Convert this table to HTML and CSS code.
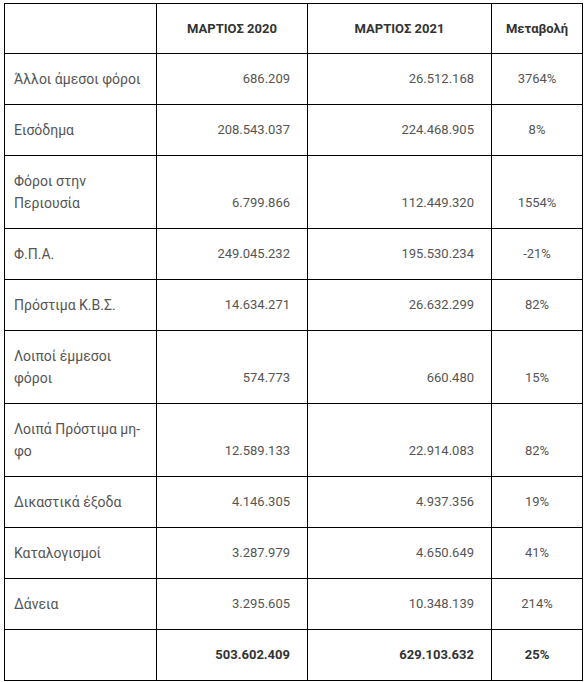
FILE: index.html
```html
<!DOCTYPE html>
<html lang="el">
<head>
<meta charset="utf-8">
<link rel="stylesheet" href="styles.css">
</head>
<body>
<div class="wrap">
<table class="tbl">
<colgroup>
<col class="c1"><col class="c2"><col class="c3"><col class="c4">
</colgroup>
<thead>
<tr><th></th><th>ΜΑΡΤΙΟΣ 2020</th><th>ΜΑΡΤΙΟΣ 2021</th><th>Μεταβολή</th></tr>
</thead>
<tbody>
<tr><td class="lbl">Άλλοι άμεσοι φόροι</td><td class="num">686.209</td><td class="num">26.512.168</td><td class="pct">3764%</td></tr>
<tr><td class="lbl">Εισόδημα</td><td class="num">208.543.037</td><td class="num">224.468.905</td><td class="pct">8%</td></tr>
<tr><td class="lbl">Φόροι στην Περιουσία</td><td class="num">6.799.866</td><td class="num">112.449.320</td><td class="pct">1554%</td></tr>
<tr><td class="lbl">Φ.Π.Α.</td><td class="num">249.045.232</td><td class="num">195.530.234</td><td class="pct">-21%</td></tr>
<tr><td class="lbl">Πρόστιμα Κ.Β.Σ.</td><td class="num">14.634.271</td><td class="num">26.632.299</td><td class="pct">82%</td></tr>
<tr><td class="lbl">Λοιποί έμμεσοι φόροι</td><td class="num">574.773</td><td class="num">660.480</td><td class="pct">15%</td></tr>
<tr><td class="lbl">Λοιπά Πρόστιμα μη-φο</td><td class="num">12.589.133</td><td class="num">22.914.083</td><td class="pct">82%</td></tr>
<tr><td class="lbl">Δικαστικά έξοδα</td><td class="num">4.146.305</td><td class="num">4.937.356</td><td class="pct">19%</td></tr>
<tr><td class="lbl">Καταλογισμοί</td><td class="num">3.287.979</td><td class="num">4.650.649</td><td class="pct">41%</td></tr>
<tr><td class="lbl">Δάνεια</td><td class="num">3.295.605</td><td class="num">10.348.139</td><td class="pct">214%</td></tr>
<tr class="total"><td class="lbl"></td><td class="num">503.602.409</td><td class="num">629.103.632</td><td class="pct">25%</td></tr>
</tbody>
</table>
</div>
</body>
</html>
```

FILE: styles.css
```css
html, body {
  margin: 0;
  padding: 0;
  background: #fff;
}
.wrap {
  padding: 3px 4px;
}
.tbl {
  border-collapse: collapse;
  table-layout: fixed;
  width: 578px;
  font-family: Roboto, "Noto Sans", sans-serif;
  font-size: 13px;
  line-height: 22px;
  color: #555;
}
.c1 { width: 152px; }
.c2 { width: 151px; }
.c3 { width: 184px; }
.c4 { width: 91px; }
.tbl th, .tbl td {
  border: 1px solid #000;
  padding: 14px 17px 14px 9px;
  vertical-align: bottom;
}
.tbl th {
  font-weight: bold;
  color: #333;
  text-align: center;
  padding: 14px 8px 13px 8px;
  vertical-align: middle;
}
.tbl td.lbl {
  text-align: left;
  padding-right: 8px;
  font-size: 14px;
}
.tbl td.num {
  text-align: right;
}
.tbl td.pct {
  text-align: center;
  padding-left: 8px;
  padding-right: 8px;
}
.tbl tr.total td {
  font-weight: bold;
  color: #333;
}
```
